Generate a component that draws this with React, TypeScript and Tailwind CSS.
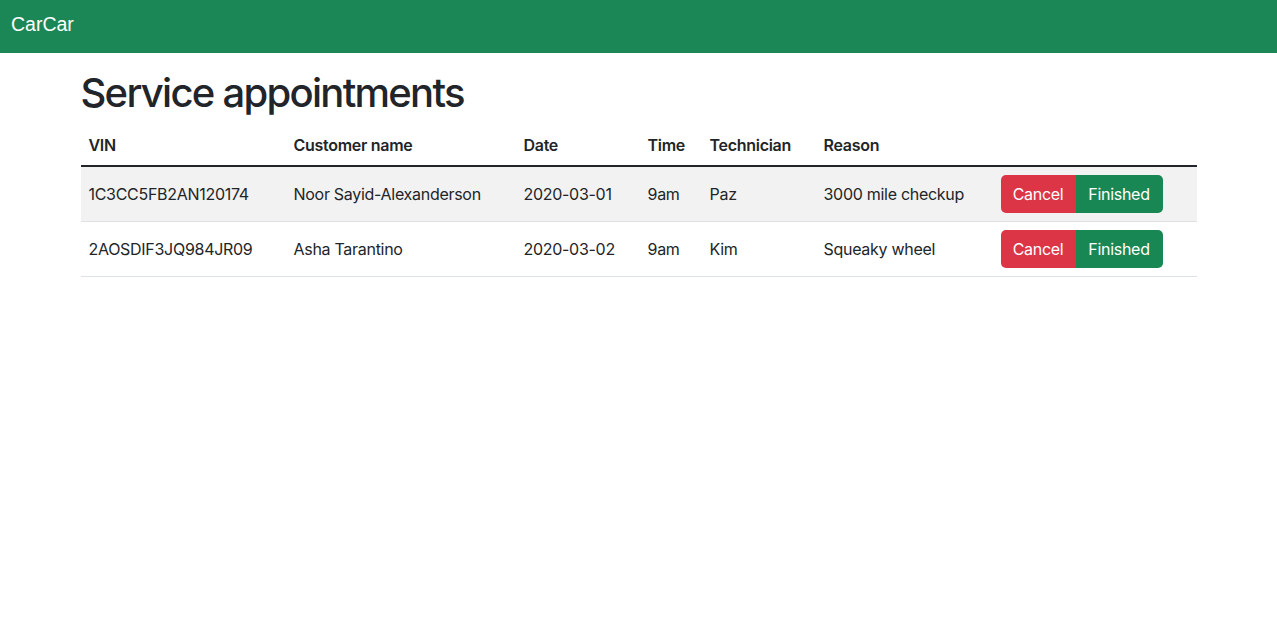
const appointments = [
  {
    vin: "1C3CC5FB2AN120174",
    customer: "Noor Sayid-Alexanderson",
    date: "2020-03-01",
    time: "9am",
    technician: "Paz",
    reason: "3000 mile checkup",
  },
  {
    vin: "2AOSDIF3JQ984JR09",
    customer: "Asha Tarantino",
    date: "2020-03-02",
    time: "9am",
    technician: "Kim",
    reason: "Squeaky wheel",
  },
];

export default function App() {
  return (
    <div className="min-h-screen bg-white font-['Inter',sans-serif] text-[#212529]">
      <nav className="flex h-[53px] items-center bg-[#1c8756] px-[11px] pb-[3px]">
        <a href="#" className="font-['Liberation_Sans',Arial,sans-serif] text-[19.5px] text-white">
          CarCar
        </a>
      </nav>
      <main className="mx-auto w-[1140px] px-3">
        <h1 className="mt-4 mb-2 text-[40px] font-medium leading-[1.2] tracking-[-0.043em]">
          Service appointments
        </h1>
        <table className="w-full border-collapse text-left text-base tracking-[-0.018em]">
          <thead>
            <tr className="border-b-2 border-[#212529]">
              <th className="w-[205px] p-2 font-semibold">VIN</th>
              <th className="w-[230px] p-2 font-semibold">Customer name</th>
              <th className="w-[124px] p-2 font-semibold">Date</th>
              <th className="w-[62px] p-2 font-semibold">Time</th>
              <th className="w-[114px] p-2 font-semibold">Technician</th>
              <th className="w-[177px] p-2 font-semibold">Reason</th>
              <th className="p-2"></th>
            </tr>
          </thead>
          <tbody>
            {appointments.map((a, i) => (
              <tr
                key={a.vin}
                className={
                  "border-b border-[#dee2e6] " + (i % 2 === 0 ? "bg-[#f2f2f2]" : "bg-white")
                }
              >
                <td className="p-2">{a.vin}</td>
                <td className="p-2">{a.customer}</td>
                <td className="p-2">{a.date}</td>
                <td className="p-2">{a.time}</td>
                <td className="p-2">{a.technician}</td>
                <td className="p-2">{a.reason}</td>
                <td className="p-2">
                  <div className="inline-flex">
                    <button className="h-[38px] w-[75px] rounded-l-[5px] bg-[#dc3545] text-white">
                      Cancel
                    </button>
                    <button className="h-[38px] w-[87px] rounded-r-[5px] bg-[#198754] text-white">
                      Finished
                    </button>
                  </div>
                </td>
              </tr>
            ))}
          </tbody>
        </table>
      </main>
    </div>
  );
}
